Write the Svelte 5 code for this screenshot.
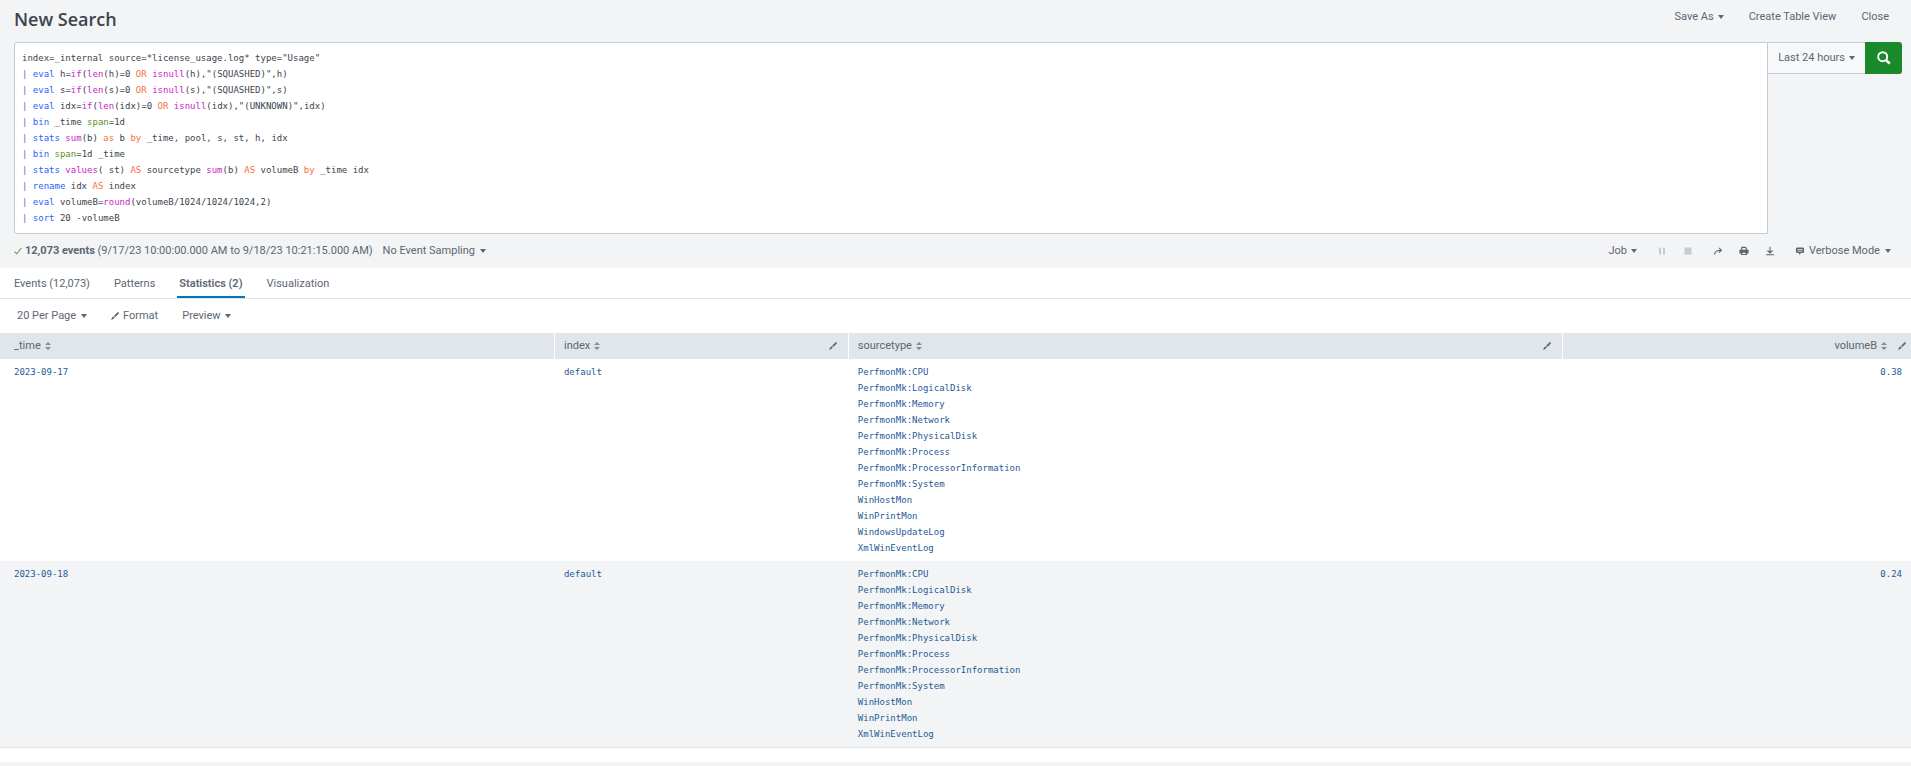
<script>
  const functions = ['if', 'len', 'isnull', 'sum', 'values', 'round'];
  const operators = ['OR', 'AS', 'as', 'by'];

  let query = $state(`index=_internal source=*license_usage.log* type="Usage"
| eval h=if(len(h)=0 OR isnull(h),"(SQUASHED)",h)
| eval s=if(len(s)=0 OR isnull(s),"(SQUASHED)",s)
| eval idx=if(len(idx)=0 OR isnull(idx),"(UNKNOWN)",idx)
| bin _time span=1d
| stats sum(b) as b by _time, pool, s, st, h, idx
| bin span=1d _time
| stats values( st) AS sourcetype sum(b) AS volumeB by _time idx
| rename idx AS index
| eval volumeB=round(volumeB/1024/1024/1024,2)
| sort 20 -volumeB`);

  let perPage = $state('20 Per Page');
  let sampling = $state('No Event Sampling');
  let mode = $state('Verbose Mode');
  let activeTab = $state('Statistics (2)');

  const tabs = ['Events (12,073)', 'Patterns', 'Statistics (2)', 'Visualization'];

  const columns = [
    { name: '_time', format: false },
    { name: 'index', format: true },
    { name: 'sourcetype', format: true },
    { name: 'volumeB', format: true, numeric: true }
  ];

  const perfmon = ['CPU', 'LogicalDisk', 'Memory', 'Network', 'PhysicalDisk', 'Process', 'ProcessorInformation', 'System']
    .map((s) => `PerfmonMk:${s}`);

  const rows = [
    {
      time: '2023-09-17',
      index: 'default',
      sourcetypes: [...perfmon, 'WinHostMon', 'WinPrintMon', 'WindowsUpdateLog', 'XmlWinEventLog'],
      volume: '0.38'
    },
    {
      time: '2023-09-18',
      index: 'default',
      sourcetypes: [...perfmon, 'WinHostMon', 'WinPrintMon', 'XmlWinEventLog'],
      volume: '0.24'
    }
  ];

  // split the search into coloured tokens
  function tokenize(text) {
    const parts = text.match(/"[^"]*"|\w+|\s+|[^\w\s]/g) || [];
    let afterPipe = false;
    return parts.map((part, i) => {
      let kind = 'plain';
      if (part === '|') {
        kind = 'pipe';
        afterPipe = true;
      } else if (/^\w/.test(part)) {
        if (afterPipe) kind = 'command';
        else if (operators.includes(part)) kind = 'operator';
        else if (functions.includes(part) && parts[i + 1] === '(') kind = 'function';
        else if (part === 'span') kind = 'argument';
        afterPipe = false;
      }
      return { part, kind };
    });
  }

  let tokens = $derived(tokenize(query));
</script>

{#snippet caret()}
  <svg class="caret" viewBox="0 0 6 4" aria-hidden="true"><path d="M0 0h6L3 4z" /></svg>
{/snippet}

{#snippet pencil()}
  <svg class="pencil" viewBox="0 0 8 8" aria-hidden="true">
    <path d="M6.6 0.2 8 0.4 7.7 1.7 4.3 5 3.1 3.7z M2.6 4.2 3.8 5.4 2.6 6.8 0 8 1.1 5.5z" />
  </svg>
{/snippet}

<div class="page">
  <header class="title-bar">
    <h1>New Search</h1>
    <nav class="actions">
      <button>Save As {@render caret()}</button>
      <button>Create Table View</button>
      <button>Close</button>
    </nav>
  </header>

  <section class="search">
    <div class="editor">
      <pre aria-hidden="true">{#each tokens as t}<span class={t.kind}>{t.part}</span>{/each}</pre>
      <textarea aria-label="Search" spellcheck="false" bind:value={query}></textarea>
    </div>
    <button class="time-range">Last 24 hours {@render caret()}</button>
    <button class="run" aria-label="Run search">
      <svg viewBox="0 0 14 14" aria-hidden="true">
        <circle cx="5.7" cy="5.7" r="4.5" fill="none" stroke="#fff" stroke-width="1.9" />
        <path d="M9 9l3.7 3.7" stroke="#fff" stroke-width="2.6" />
      </svg>
    </button>
  </section>

  <section class="status">
    <svg class="check" viewBox="0 0 8 8" aria-hidden="true"><path d="M0.5 4.6 2.8 6.8 7.5 1" /></svg>
    <p><strong>12,073 events</strong> (9/17/23 10:00:00.000 AM to 9/18/23 10:21:15.000 AM)</p>
    <label class="picker">
      <select aria-label="Event sampling" bind:value={sampling}>
        <option>No Event Sampling</option>
      </select>
      {@render caret()}
    </label>

    <div class="job">
      <button class="job-menu">Job {@render caret()}</button>
      <button class="icon" aria-label="Pause" disabled>
        <svg viewBox="0 0 10 10" aria-hidden="true"><path d="M2 1.5h2v7H2zM6 1.5h2v7H6z" /></svg>
      </button>
      <button class="icon stop" aria-label="Stop" disabled>
        <svg viewBox="0 0 10 10" aria-hidden="true"><path d="M1.5 1.5h7v7h-7z" /></svg>
      </button>
      <button class="icon" aria-label="Share">
        <svg viewBox="0 0 10 10" aria-hidden="true">
          <path d="M1.5 8.5C1.7 5.7 3.2 4.2 8 4.2M6 1.9 8.4 4.2 6 6.5" fill="none" stroke="currentColor" stroke-width="1.1" />
        </svg>
      </button>
      <button class="icon" aria-label="Print">
        <svg viewBox="0 0 10 10" aria-hidden="true">
          <path fill-rule="evenodd" d="M2.2.8h4.5l1.1 1.1v1.7H9l.6.6v3.4H8V9H2V7.6H.4V4.2L1 3.6h1.2zM3.4 1.9v1.9h3.2V2.5L6 1.9zM3.4 6.7v1.2h3.2V6.7z" />
        </svg>
      </button>
      <button class="icon" aria-label="Export">
        <svg viewBox="0 0 10 10" aria-hidden="true">
          <path d="M5 .8v6M2.5 4.5 5 7l2.5-2.5M1 8.8h8" fill="none" stroke="currentColor" stroke-width="1.1" />
        </svg>
      </button>
    </div>

    <label class="picker mode">
      <svg class="chat" viewBox="0 0 8 8" aria-hidden="true">
        <path fill-rule="evenodd" d="M.8.5h6.4l.8.7v4.1l-.8.7H5L3 8V6H.8L0 5.3V1.2zM1.5 2v.8h5V2zM1.5 3.7v.8h5v-.8z" />
      </svg>
      <select aria-label="Search mode" bind:value={mode}>
        <option>Verbose Mode</option>
      </select>
      {@render caret()}
    </label>
  </section>

  <main>
    <div class="tabs" role="tablist">
      {#each tabs as tab}
        <button role="tab" aria-selected={activeTab === tab} class:active={activeTab === tab} onclick={() => (activeTab = tab)}>{tab}</button>
      {/each}
    </div>

    <div class="toolbar">
      <label class="picker">
        <select aria-label="Rows per page" bind:value={perPage}>
          <option>20 Per Page</option>
        </select>
        {@render caret()}
      </label>
      <button>{@render pencil()} Format</button>
      <button>Preview {@render caret()}</button>
    </div>

    <table>
      <colgroup>
        <col class="col-time" />
        <col class="col-index" />
        <col class="col-sourcetype" />
        <col />
      </colgroup>
      <thead>
        <tr>
          {#each columns as col}
            <th scope="col" class:numeric={col.numeric}>
              <div class="head">
                <button class="sort">
                  {col.name}
                  <svg viewBox="0 0 6 8" aria-hidden="true"><path d="M0 3h6L3 0zM0 5h6L3 8z" /></svg>
                </button>
                {#if col.format}
                  <button aria-label="Format {col.name}">{@render pencil()}</button>
                {/if}
              </div>
            </th>
          {/each}
        </tr>
      </thead>
      <tbody>
        {#each rows as row}
          <tr>
            <td>{row.time}</td>
            <td>{row.index}</td>
            <td>
              {#each row.sourcetypes as st}
                <div>{st}</div>
              {/each}
            </td>
            <td class="numeric">{row.volume}</td>
          </tr>
        {/each}
      </tbody>
    </table>
  </main>
</div>

<style>
  :global(body) {
    background: #f2f4f5;
  }

  .page {
    font-family: Roboto, "Open Sans", sans-serif;
    font-size: 11px;
    line-height: 16px;
    color: #5c6773;
  }

  button, select {
    appearance: none;
    display: inline-flex;
    align-items: center;
    gap: 4px;
    margin: 0;
    padding: 0;
    border: 0;
    background: none;
    font: inherit;
    color: inherit;
    white-space: nowrap;
    cursor: pointer;
  }

  svg {
    display: block;
    flex: none;
    fill: currentColor;
  }

  .caret { width: 6px; height: 4px; }
  .pencil { width: 8px; height: 8px; }

  .title-bar {
    display: flex;
    justify-content: space-between;
    height: 42px;
    padding: 0 22px 0 14px;
  }
  h1 {
    margin: 0;
    padding-top: 7px;
    font-family: "Open Sans", sans-serif;
    font-size: 18px;
    line-height: 24px;
    font-weight: 600;
    color: #3c444d;
  }
  .actions {
    display: flex;
    align-items: flex-start;
    gap: 25px;
    padding-top: 9px;
  }

  .search {
    display: flex;
    align-items: flex-start;
    padding: 0 9px 0 14px;
  }
  .editor {
    position: relative;
    flex: 1;
    background: #fff;
    border: 1px solid #c3cbd4;
    border-radius: 3px 0 0 3px;
  }
  pre, textarea {
    box-sizing: border-box;
    margin: 0;
    padding: 7px;
    font: 9px/16px "DejaVu Sans Mono", monospace;
    white-space: pre-wrap;
  }
  pre { color: #3c444d; }
  /* the real input sits over its highlighted copy */
  textarea {
    position: absolute;
    inset: 0;
    width: 100%;
    height: 100%;
    border: 0;
    outline: 0;
    resize: none;
    overflow: hidden;
    background: transparent;
    color: transparent;
    caret-color: #3c444d;
  }
  .pipe { color: #5863c4; }
  .command { color: #2662fc; }
  .function { color: #cb25c6; }
  .operator { color: #f7713c; }
  .argument { color: #5a9425; }

  .time-range {
    height: 32px;
    padding: 0 10px;
    background: #f7f8fa;
    border: solid #c3cbd4;
    border-width: 1px 0;
  }
  .run {
    justify-content: center;
    width: 37px;
    height: 32px;
    background: #1a8929;
    border-radius: 0 3px 3px 0;
  }
  .run svg { width: 14px; height: 14px; }

  .status {
    display: flex;
    align-items: center;
    height: 34px;
    padding: 0 20px 0 14px;
  }
  .status p { margin: 0 10px 0 3px; }
  .check {
    width: 8px;
    height: 8px;
    fill: none;
    stroke: #53a051;
    stroke-width: 1.1;
  }
  .picker {
    display: inline-flex;
    align-items: center;
    gap: 4px;
  }
  .picker select {
    margin-right: -10px;
    padding-right: 10px;
  }
  .picker .caret { pointer-events: none; }
  .job {
    display: flex;
    align-items: center;
    gap: 16px;
    margin-left: auto;
  }
  .job-menu, .stop { margin-right: 4px; }
  .icon svg { width: 10px; height: 10px; }
  .icon:disabled { color: #c3cbd4; }
  .mode {
    gap: 5px;
    margin-left: 21px;
  }
  .chat { width: 8px; height: 8px; }

  main {
    background: #fff;
    padding-bottom: 14px;
  }
  .tabs {
    display: flex;
    gap: 20px;
    height: 30px;
    padding: 0 12px;
    border-bottom: 1px solid #dfe4e8;
  }
  .tabs button {
    padding: 4px 2px 0;
    border-bottom: 2px solid transparent;
  }
  .tabs .active {
    font-weight: 600;
    border-color: #007abd;
  }

  .toolbar {
    display: flex;
    align-items: center;
    gap: 24px;
    height: 34px;
    padding: 0 17px;
  }

  table {
    width: 100%;
    table-layout: fixed;
    border-collapse: separate;
    border-spacing: 0;
    border-bottom: 1px solid #e1e6eb;
  }
  .col-time { width: 29.04%; }
  .col-index { width: 15.38%; }
  .col-sourcetype { width: 37.36%; }

  th {
    height: 26px;
    padding: 0 11px 0 9px;
    background: #e1e6eb;
    border-right: 1px solid #fff;
    font-weight: 400;
  }
  th:first-child, td:first-child { padding-left: 14px; }
  th:last-child {
    padding-right: 5px;
    border-right: 0;
  }
  .head {
    display: flex;
    align-items: center;
    justify-content: space-between;
  }
  .numeric .head {
    justify-content: flex-end;
    gap: 11px;
  }
  .sort svg {
    width: 6px;
    height: 8px;
    color: #818d99;
  }

  td {
    padding: 5px 9px;
    vertical-align: top;
    font: 9px/16px "DejaVu Sans Mono", monospace;
    color: #1e5a96;
  }
  td.numeric { text-align: right; }
  tbody tr:nth-child(even) { background: #f2f4f5; }
</style>
